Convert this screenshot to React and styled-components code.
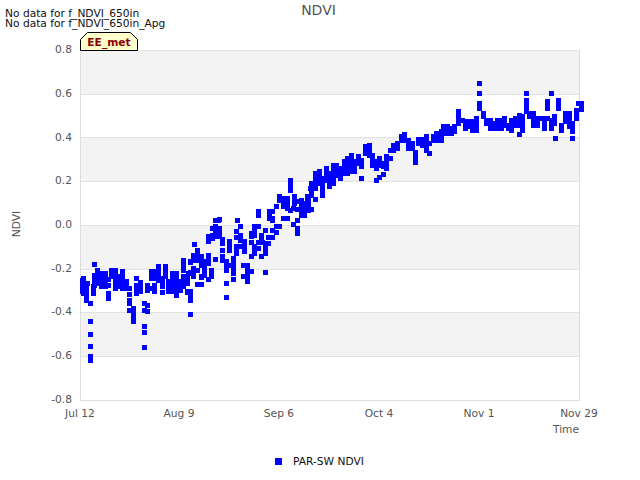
import React from "react";
import styled, { createGlobalStyle } from "styled-components";

const Global = createGlobalStyle`
  html, body { margin: 0; padding: 0; background: #fff; }
  body { font-family: "DejaVu Sans", sans-serif; }
`;

const Page = styled.div`
  position: relative;
  width: 640px;
  height: 480px;
  overflow: hidden;
  background: #fff;
`;
const Header = styled.header`
  height: 40px;
  display: flex;
  justify-content: center;
  align-items: flex-start;
`;
const Title = styled.h1`
  margin: 3px 3px 0 0;
  font-size: 14px;
  line-height: 14px;
  font-weight: 400;
  color: #555;
`;
const Notes = styled.div`
  position: absolute;
  left: 5px;
  top: 9px;
  font-size: 10.67px;
  line-height: 10px;
  color: #111;
`;
const Note = styled.div`
  white-space: nowrap;
`;
const Badge = styled.div`
  position: absolute;
  left: 80px;
  top: 32px;
  width: 58px;
  height: 19px;
  display: flex;
  align-items: center;
  justify-content: center;
  font-size: 10.67px;
  font-weight: 700;
  color: #8b0000;
`;
const BadgeShape = styled.svg`
  position: absolute;
  inset: 0;
`;
const BadgeText = styled.span`
  position: relative;
  top: 1px;
`;
const Chart = styled.svg`
  display: block;
`;
const Legend = styled.div`
  display: flex;
  align-items: center;
  height: 14px;
  margin-top: 11px;
  padding-left: 275px;
  gap: 11px;
  font-size: 10.67px;
  color: #111;
`;
const LegendMark = styled.span`
  width: 7px;
  height: 7px;
  background: #0000ff;
`;

// Measured marks: [x, top, bottom?] in 3x-crop coordinates.
const crop = (ox, oy, runs) =>
  runs.flatMap(([X, a, b]) => {
    const out = [];
    const end = b ?? a;
    for (let Y = a; Y <= end; Y += 7) out.push([ox + X / 3, oy + Y / 3]);
    if (b != null) out.push([ox + X / 3, oy + b / 3]);
    return out;
  });

const A = [[40,265,310],[37,270,305],[49,280,330],[53,280],[61,340],[61,394],[61,433],[61,469],[61,498],[61,511],[70,290,310],[73,255,285],[73,223],[82,240,280],[94,250,290],[105,250,290],[115,268],[115,285],[115,310,325],[125,240,260],[136,240,295],[147,260,290],[157,245,295],[168,275,295],[178,295],[178,313],[178,330,340],[178,361],[190,355,395],[199,265],[199,285,310],[211,277,305],[223,340],[223,361],[223,409],[223,427],[223,472],[232,345],[232,364],[232,285,300],[241,295],[244,245,265],[253,285,305],[253,245,265],[265,230,270],[277,265,290],[277,307],[286,230,260],[295,275,305],[306,250,305],[319,250,315],[328,275,300],[340,210,235],[340,258,290],[352,265,280],[352,305],[361,305,330],[361,373],[361,215],[361,248],[370,235,260],[373,163],[373,200],[382,180,195],[382,240],[382,283],[394,283],[394,200,225],[394,262],[403,215,255],[415,215],[415,140,155],[415,268],[424,240,258],[427,115],[427,135],[436,90],[436,110,140],[436,208],[445,90],[445,115,140]];
const B = [[10,360,390],[10,408],[10,425],[10,440],[0,450],[22,420],[25,400],[22,457],[31,457,480],[31,367],[40,385,410],[40,345,360],[43,313],[52,330,360],[52,391],[52,433],[65,433],[64,350,375],[64,410],[73,370,400],[85,345,370],[85,418],[94,395,408],[106,357],[106,240],[97,265],[85,290,300],[97,285,295],[106,258,285],[118,238],[118,265,290],[127,298,310],[127,331],[127,350,360],[139,365,390],[139,430],[139,472],[148,305,330],[148,375],[160,355,400],[160,418],[169,320,340],[172,241],[169,275],[169,292],[181,258],[181,285,300],[181,320],[193,305,335],[190,376],[190,409],[202,376,395],[202,409,424],[214,280,290],[214,307],[214,349],[214,394],[223,260,285],[223,320,340],[235,215,225],[235,258],[235,325],[244,285,295],[244,349],[235,307],[247,307],[256,270],[256,325,340],[256,310],[256,397],[265,292],[265,310],[277,292],[277,270],[277,235,242],[277,215],[268,215,235],[289,277],[289,258],[289,200],[298,258],[298,170,180],[310,235],[310,175,200],[322,235],[322,175,190],[322,205],[331,122,150],[331,210],[340,253],[340,205],[343,170,190],[352,240],[352,265,280],[352,185],[352,208],[364,180,215],[373,190,225],[385,170,210],[391,145]];
const C = [[5,240,285],[13,250,285],[22,230,270],[34,225],[34,268],[34,190,210],[46,238],[46,160,195],[46,205],[58,155,190],[67,175,225],[79,145,180],[88,160,200],[100,135,190],[109,135,165],[121,145,175],[133,125,160],[142,115,160],[154,105,155],[163,125,155],[175,110,130],[184,120,140],[184,175],[196,80,100],[208,75,105],[217,105,135],[229,125,145],[229,181],[238,115,135],[238,172],[250,130,140],[250,163],[259,110,145],[271,115],[271,91],[280,75,90],[292,70,85],[304,50,60],[313,42,60],[325,60,85],[337,70,85],[346,97,127],[355,58,70],[367,58,75],[379,50,90],[388,70],[388,100],[400,50,60],[409,40,60],[421,40,60],[430,20,40],[442,20,40]];
const D = [[3,185,210],[10,170,185],[22,170,190],[34,175,190],[43,170,185],[55,125,160],[67,150],[76,155,175],[88,155,170],[97,155,180],[109,145,180],[118,40],[118,70],[118,100,115],[130,130,140],[139,150,160],[151,150,175],[163,160,175],[172,150,175],[184,150,175],[193,145,165],[205,165,175],[214,150,180],[226,145,165],[238,135,165],[238,193],[247,140,180],[259,70],[259,90,125],[268,130,140],[280,130,165],[292,145,165],[304,145],[313,145,175],[322,95,115],[322,145],[334,70],[334,150,175],[343,140,160],[346,205],[355,90,115],[364,165,180],[376,130,155],[388,130,170],[397,160,185],[397,205],[409,120,145],[415,100],[424,100,118]];

const points = [
  ...crop(70, 190, A),
  ...crop(180, 140, B),
  ...crop(300, 120, C),
  ...crop(440, 70, D),
];

const OY = 40; // the svg starts 40px down the page
const bands = [50, 137, 225, 312];
const grid = [94, 137, 181, 225, 269, 312, 356];
const yTicks = [
  ["0.8", 49], ["0.6", 93], ["0.4", 137], ["0.2", 180], ["0.0", 224],
  ["-0.2", 268], ["-0.4", 311], ["-0.6", 355], ["-0.8", 399],
];
const xTicks = [["Jul 12", 80], ["Aug 9", 179], ["Sep 6", 279], ["Oct 4", 379], ["Nov 1", 479], ["Nov 29", 579]];

export default function App() {
  return (
    <Page>
      <Global />
      <Header>
        <Title>NDVI</Title>
      </Header>
      <Notes>
        <Note>No data for f_NDVI_650in</Note>
        <Note>No data for f_NDVI_650in_Apg</Note>
      </Notes>
      <Chart width="640" height="403" viewBox={`0 ${OY} 640 403`} fontFamily="DejaVu Sans" fontSize="10.67" fill="#555">
        {bands.map((y) => (
          <rect key={y} x="80" y={y} width="500" height="44" fill="#f3f3f3" />
        ))}
        {grid.map((y) => (
          <line key={y} x1="80" x2="580" y1={y + 0.5} y2={y + 0.5} stroke="#e2e2e2" />
        ))}
        <path d="M80.5 50V400.5H579.5V50" fill="none" stroke="#ddd" />
        <line x1="80" x2="580" y1="50.5" y2="50.5" stroke="#e2e2e2" />
        {points.map(([x, y], i) => (
          <rect key={i} x={Math.round(x - 2.5)} y={Math.round(y - 2.5)} width="5" height="5" fill="#0000ff" />
        ))}
        {yTicks.map(([t, y]) => (
          <text key={t} x="72" y={y + 4} textAnchor="end">{t}</text>
        ))}
        {xTicks.map(([t, x]) => (
          <text key={t} x={x} y="417" textAnchor="middle">{t}</text>
        ))}
        <text x="566" y="433" textAnchor="middle">Time</text>
        <text transform="translate(20 224) rotate(-90)" textAnchor="middle">NDVI</text>
      </Chart>
      <Legend>
        <LegendMark />
        <span>PAR-SW NDVI</span>
      </Legend>
      <Badge>
        <BadgeShape width="58" height="19" viewBox="0 0 58 19">
          <path d="M0.5 18.5V7.5L7.5 0.5H50.5L57.5 7.5V18.5Z" fill="#ffffcc" stroke="#000" />
        </BadgeShape>
        <BadgeText>EE_met</BadgeText>
      </Badge>
    </Page>
  );
}
